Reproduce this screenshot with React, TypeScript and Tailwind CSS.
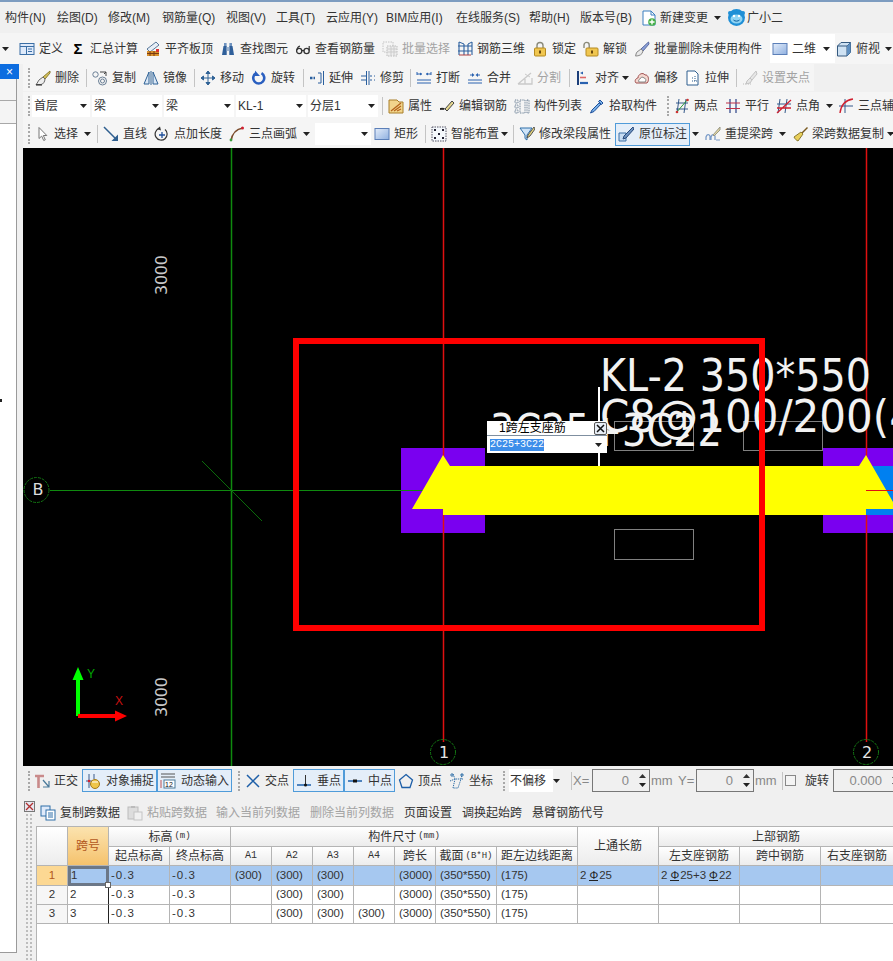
import React from "react";

type N = React.ReactNode;
const S = ({ children, s = 16 }: { children: N; s?: number }) => (
  <svg width={s} height={s} viewBox="0 0 16 16" fill="none" className="block shrink-0">{children}</svg>
);

const Arrow = ({ c = "" }: { c?: string }) => (
  <svg width="7" height="4" viewBox="0 0 7 4" className={`block shrink-0 ${c}`}><path d="M0 0H7L3.5 4z" fill="#222" /></svg>
);
const Grip = ({ c = "" }: { c?: string }) => <div className={`w-[3px] h-[20px] shrink-0 border-l-2 border-dotted border-[#a8a8a8] ${c}`} />;
const Sep = () => <div className="w-px h-[18px] shrink-0 bg-[#c4c4c4] mr-[5px]" />;

function T({ w, icon, label, off, after }: { w: string; icon?: N; label: string; off?: boolean; after?: N }) {
  return (
    <div className={`flex items-center shrink-0 whitespace-nowrap ${w}`}>
      {icon !== undefined && <span className="w-[16px] h-[16px] mr-[4px] shrink-0 flex items-center justify-center">{icon}</span>}
      <span className={off ? "text-[#a3a3a3]" : ""}>{label}</span>
      {after}
    </div>
  );
}

/* ---- icons ---- */
const IDefine = () => <S><rect x="1" y="2.5" width="14" height="11" fill="#dfeafa" stroke="#3a6ea5" /><path d="M1 5.5h14M9 8h4M9 10.5h4M7.500 5.500v8" stroke="#3a6ea5" /></S>;
const ISigma = () => <span className="font-bold text-[15px] text-black leading-none">Σ</span>;
const IBoard = () => <S><path d="M2 8 11 1l3 3-9 7z" fill="#e7eef6" stroke="#58789a" /><rect x="2" y="10" width="12" height="5" fill="#d8912d" /><path d="M5 10v5M9 10v5M2 12.5h12" stroke="#7a3a10" /><rect x="11" y="8" width="3" height="3" fill="#d33" /></S>;
const IBinoc = () => <S><path d="M2 14 3.5 5h3.2V14zM14 14 12.5 5H9.3V14z" fill="#2f5f9a" /><rect x="4" y="2" width="2.6" height="3" fill="#6f93bf" /><rect x="9.4" y="2" width="2.6" height="3" fill="#6f93bf" /><rect x="6.7" y="6" width="2.6" height="4" fill="#9db4cf" /></S>;
const IGlasses = () => <S><circle cx="4.2" cy="10" r="2.6" stroke="#333" strokeWidth="1.3" /><circle cx="11.6" cy="10" r="2.6" stroke="#333" strokeWidth="1.3" /><path d="M6.8 9.6h2.2M2 9c.2-2 1-3.5 3-4M14.2 9.6V5" stroke="#333" strokeWidth="1.2" /></S>;
const IBatch = () => <S><rect x="1" y="1" width="10" height="10" stroke="#c4c4c4" strokeDasharray="1.5 1" /><rect x="5" y="5" width="10" height="10" fill="#eee" stroke="#bbb" strokeDasharray="1.5 1" /><path d="M5 8h10M5 11h10M9 5v10M12 5v10" stroke="#ccc" /></S>;
const IRebar3D = () => <S><path d="M2 1v13M7 3v11M11 3v11M15 1v13M1 5h14M1 10h14" stroke="#2b5f9e" strokeWidth="1.1" /><path d="M2 1l5 2M15 1l-4 2" stroke="#2b5f9e" /><path d="M2 14h12" stroke="#b04040" /></S>;
const ILock = ({ open }: { open?: boolean }) => <S><path d={open ? "M1 7V4a2.6 2.6 0 0 1 5.2 0v3" : "M5 7V4.5a3 3 0 0 1 6 0V7"} stroke="#8a8a7a" strokeWidth="1.4" /><rect x={open ? 3 : 2.5} y="7" width={open ? 12 : 11} height="8" rx="1" fill="#f0c650" stroke="#b58a20" /><rect x={open ? 8 : 7} y="9.5" width="2" height="3" fill="#6a4a10" /></S>;
const IBrush = () => <S><path d="M14.5 1 7 8l2 2 6-7z" fill="#8aa0d8" stroke="#5a6aa0" /><path d="M7 8 3 11c-1 1-1 3-1.5 4 2 0 5-.5 6.500-2.500L9 10z" fill="#e8e8e8" stroke="#888" /></S>;
const IRect = () => <S><rect x="1" y="2.5" width="14" height="11" fill="url(#rg)" stroke="#5b7fb8" /><defs><linearGradient id="rg" x1="0" y1="0" x2="1" y2="1"><stop offset="0" stopColor="#e4edfa" /><stop offset="1" stopColor="#8fb0e0" /></linearGradient></defs></S>;
const ICube = () => <S><path d="M1.500 5 5 1.500h9.500v10L11 15H1.500z" fill="#cfe2f3" stroke="#34597f" /><path d="M1.500 5H11v10M11 5l3.500-3.500" stroke="#34597f" /><path d="M11 5v10l3.500-3.500v-10z" fill="#5f8fc0" /></S>;
const IDel = () => <S><path d="M15 1 8 7l2 2 5-6z" fill="#d6c35a" stroke="#8a7a30" /><path d="M8 7 4 10c-1 1-1 2.500-3 4.500h5c2 0 4-3 4-5.500z" fill="#eee" stroke="#666" /><path d="M1 15h6" stroke="#222" /></S>;
const ICopy = () => <S><circle cx="3.500" cy="4.500" r="2.700" stroke="#6a7f95" /><circle cx="10.500" cy="11" r="4" stroke="#6a7f95" /><circle cx="10.500" cy="11" r="2" stroke="#6a7f95" /><path d="M8 2h6v4M14 2l-2 2" stroke="#444" /></S>;
const IMirror = () => <S><path d="M1 14 6 2v12zM15 14 10 2v12z" fill="#dbe8f6" stroke="#2f6296" /><path d="M8 1v14" stroke="#2f6296" /></S>;
const IMove = () => <S><path d="M8 1v14M1 8h14M8 1 6 3.500h4zM8 15l-2-2.500h4zM1 8l2.500-2v4zM15 8l-2.500-2v4z" stroke="#2f6296" fill="#2f6296" /></S>;
const IRotate = () => <S><path d="M10.500 3.200A5.500 5.500 0 1 1 5 3.200" stroke="#2a5fc0" strokeWidth="2.600" /><path d="M4 .5v5.500h5z" fill="#2a5fc0" /></S>;
const IExtend = () => <S><path d="M1 8h5" stroke="#2a5f9e" strokeWidth="2.400" strokeDasharray="2.500 1" /><path d="M9 3h3v10H9M14.500 1v14" stroke="#2a5f9e" /></S>;
const ITrim = () => <S><path d="M1 6h5M1 10h5M10 6h2M10 10h2M14 6h1M14 10h1" stroke="#2a5f9e" /><path d="M6.500 1v14M9 1v14" stroke="#2a5f9e" /></S>;
const IBreak = () => <S><path d="M1 5V2M15 5V2M1 4h5M10 4h5M1 10h14M1 13h14" stroke="#2a62b0" /><path d="M6 4 4 2.500v3zM10 4l2-1.500v3z" fill="#2a62b0" /></S>;
const IMerge = () => <S><path d="M1 10h14M1 13h14M3 5h3M10 5h3" stroke="#2a62b0" /><path d="M7.500 5 5 3v4zM8.500 5 11 3v4z" fill="#2a62b0" /></S>;
const ISplit = () => <S><path d="M1 14h14V8M1 14 14 3M8 14V9" stroke="#c9c9c9" strokeWidth="1.300" /><path d="M8 4l5 3" stroke="#c9c9c9" /></S>;
const IAlign = () => <S><path d="M3 1v14" stroke="#1c3f7a" strokeWidth="2" /><path d="M5 13h8" stroke="#2a62b0" strokeWidth="2.200" /><path d="M5 7.500h6" stroke="#d66" strokeWidth="1.600" /><path d="M5 3l3-1.500v3z" fill="#2a62b0" /></S>;
const IOffset = () => <S><path d="M2 13c-2-2 0-5 2-5 0-4 5-6 7-3 3-1 5 5 2 8z" fill="#f6d8d0" stroke="#a05050" /><path d="M5 12c-1-1 0-3 1-3 .5-2 3-2.500 4-1 2 0 2.500 3 1 4z" fill="#fff" stroke="#888" /></S>;
const IStretch = () => <S><path d="M2 1h8l3 3v11H2z" fill="#fff" stroke="#2f5f8f" /><path d="M7 8h1M7 11h5M10 6v5" stroke="#2f5f8f" strokeDasharray="1 1" /></S>;
const IGripSet = () => <S><path d="M1 14h3M6 14h3" stroke="#bbb" strokeDasharray="1 1" /><path d="M14 1 8 8l2 2 5-6zM8 8 5 11l-1 3 4-1 2-3z" fill="#e6e6e6" stroke="#c2c2c2" /></S>;
const IAttr = () => <S><path d="M1 2h8l2 2h4v11H1z" fill="#f2d58c" stroke="#a87f2a" /><path d="M3 13 13 5M6 13l7-5M9 13l4-2" stroke="#b5641c" strokeWidth="1.300" /></S>;
const IEdit = () => <S><path d="M1 11c1-1 3-1 5 0M6 11 13 3l2 2-7 8z" fill="#e6d890" stroke="#444" /><path d="M1 11h4" stroke="#111" strokeWidth="1.500" /></S>;
const IList = () => <S><path d="M1 2h3v3H1zM1 7h3v3H1zM1 12h3v3H1z" stroke="#6a7f95" strokeDasharray="1 .7" /><path d="M6 2h5v13H6zM13 2h2v13h-2z" stroke="#6a7f95" strokeDasharray="1 .7" /></S>;
const IPick = () => <S><path d="M11 2l3 3-1.500 1.500-3-3zM10 5 3 12l-1.500 3L5 13.500 12 6z" fill="#77b0e8" stroke="#1e4f9a" /></S>;
const ITwo = () => <S><path d="M2 5h12M2 11h12M5 1 3 15M12 1l-2 14" stroke="#34598a" /><path d="M2 15 14 1" stroke="#2c9a3a" /><circle cx="3" cy="14" r="1.300" fill="#c33" /><circle cx="13.500" cy="2" r="1.300" fill="#c33" /></S>;
const IPar = () => <S><path d="M5 1v14M11 1v14" stroke="#3a4f8f" strokeWidth="1.300" /><path d="M1 5h14M1 10.500h14" stroke="#c0304a" strokeWidth="1.200" /></S>;
const IAngle = () => <S><path d="M4 1 2 15M11 1 9 15M1 6h14" stroke="#34598a" /><path d="M1 15 15 2M1 10h14" stroke="#d02030" strokeWidth="1.300" /></S>;
const IThree = () => <S><path d="M7 1v14M1 8h14" stroke="#34598a" /><path d="M2 15C3 7 8 2 15 1" stroke="#d02030" strokeWidth="1.400" /></S>;
const ICursor = () => <S><path d="M5 1.500v11l2.700-2.400 2 4.400 1.600-.7-2-4.300h3.500z" fill="#fff" stroke="#777" /></S>;
const ILine = () => <S><path d="M1 1l13 13" stroke="#2f5f8f" strokeWidth="1.500" /><path d="M15 15H8.500L15 8.500z" fill="#2f5f8f" /></S>;
const IPointLen = () => <S><path d="M5 2.500A6 6 0 1 0 11 3.500" stroke="#333" strokeWidth="1.200" /><path d="M8 6v6M5 9h6" stroke="#1e4f9a" strokeWidth="1.300" /><path d="M6 .5 3 3l4 1.500z" fill="#333" /></S>;
const IArc = () => <S><path d="M2 15C3 8 7 3 14 2" stroke="#7a4a2a" strokeWidth="1.500" /><circle cx="2" cy="14" r="1.400" fill="#3a9a3a" /><circle cx="13.500" cy="2" r="1.500" fill="#d02030" /></S>;
const ISmart = () => <S><rect x="1" y="1" width="14" height="14" fill="#f4f8fc" stroke="#556" strokeDasharray="1.500 1" /><path d="M3 3h2v2H3zM11 3h2v2h-2zM7 7h2v2H7zM3 11h2v2H3zM11 11h2v2h-2z" fill="#223" /></S>;
const IModSeg = () => <S><path d="M1 2h12L8 9v5l-2-1.500V9z" fill="#cfe4f8" stroke="#2f6fa8" /><path d="M15 1 9 9l-1 3 3-2 5-7z" fill="#e4d47a" stroke="#555" /></S>;
const IInPlace = () => <S><path d="M1 15V7h7v8z" fill="#c7dcf2" stroke="#3a6ea5" /><path d="M15 1 6 10l-1 3 3-1 8-9z" fill="#6f93c0" stroke="#28497a" /></S>;
const IRe = () => <S><path d="M1 14v-3c1-3 3-3 4-1v4M6 14v-3c1-3 3-3 4-1v4" stroke="#7a9bc8" strokeWidth="1.300" /><path d="M15 1 8 9l1 1 6-6z" fill="#e4d6a0" stroke="#998" /><path d="M11 14h4" stroke="#7a9bc8" /></S>;
const IBroom = () => <S><path d="M15 1 9 7l1 1 6-6z" fill="#7a5a20" /><path d="M9 6 2 11c1 2 2 3 4 4l5-7z" fill="#e9cf5a" stroke="#8a7a30" /></S>;
const IOrtho = () => <S><path d="M1 3h9M4.500 3v12" stroke="#c98a8a" strokeWidth="2.600" /><path d="M9 7l6 7M9 14h6V8" stroke="#4a7a9a" strokeWidth="1.200" /></S>;
const ISnap = () => <S><path d="M4 1v14M1 8h6M9 1v5" stroke="#3a5a8a" /><circle cx="10" cy="11" r="4.500" fill="#efc64a" stroke="#a57a1a" /><path d="M7 9h6" stroke="#fff" /><circle cx="4" cy="8" r="1.300" fill="#d02030" /></S>;
const IDyn = () => <S><path d="M1 1h14M1 4h14" stroke="#555" /><rect x="4" y="7" width="11" height="8" fill="#fff" stroke="#4a7a9a" /><text x="5" y="14" fontSize="7" fill="#111" fontFamily="Liberation Sans">12</text><path d="M1 7v8" stroke="#c05050" /></S>;
const ICross = () => <S><path d="M2 2l12 12M14 2 2 14" stroke="#1e5fa8" strokeWidth="1.500" /></S>;
const IPerp = () => <S><path d="M1 12h14" stroke="#1e5fa8" strokeWidth="1.500" /><path d="M9.500 2v10" stroke="#333" /><circle cx="9.500" cy="12" r="1.500" fill="#111" /></S>;
const IMid = () => <S><path d="M1 8h14" stroke="#1e5fa8" strokeWidth="1.500" /><rect x="6" y="6.500" width="4" height="3" fill="#111" /></S>;
const IVertex = () => <S><path d="M8 1.500 14.500 7 12 14.500H4L1.500 7z" stroke="#1e5fa8" strokeWidth="1.300" /></S>;
const ICoord = () => <S><path d="M4 15 6 6h6l-3 9zM1 8l5-2M14 6l-2 0M4 1l2 5M13 1l-1 5" stroke="#2f6fa8" strokeDasharray="1.200 .8" /><circle cx="3" cy="2" r="1.200" stroke="#2f6fa8" /><circle cx="13" cy="2" r="1.200" stroke="#2f6fa8" /></S>;
const ICopyData = () => <S><rect x="1" y="1" width="9" height="10" fill="#dfeafa" stroke="#2f6fa8" /><rect x="6" y="5" width="9" height="10" fill="#fff" stroke="#2f6fa8" /><path d="M8 8h5M8 10h5M8 12h5" stroke="#2f6fa8" /></S>;
const IPaste = () => <S><rect x="1" y="2" width="10" height="12" fill="#ddd" stroke="#bbb" /><rect x="4" y="1" width="4" height="2" fill="#bbb" /><rect x="7" y="7" width="8" height="8" fill="#f0f0f0" stroke="#c4c4c4" /></S>;
const IDoc = () => <S><path d="M2 1h8l4 4v10H2z" fill="#fff" stroke="#3a7fc0" /><path d="M10 1v4h4" stroke="#3a7fc0" /><circle cx="11" cy="12" r="3.800" fill="#45b045" /><path d="M11 9.500v5M8.500 12h5" stroke="#fff" strokeWidth="1.400" /></S>;
const IFace = () => <svg width="19" height="19" viewBox="0 0 19 19" className="block shrink-0"><circle cx="9.500" cy="9.500" r="8.500" fill="#1f8fd6" /><circle cx="3" cy="5" r="2" fill="#1f8fd6" /><circle cx="16" cy="5" r="2" fill="#1f8fd6" /><ellipse cx="9.500" cy="11" rx="6" ry="4.500" fill="#8fd4f4" /><circle cx="7" cy="8" r="1.200" fill="#fff" /><circle cx="12" cy="8" r="1.200" fill="#fff" /><path d="M6.500 12c1.500 1.500 4.500 1.500 6 0" stroke="#0a5a9a" fill="none" /></svg>;

/* ---- combo ---- */
function Combo({ w, label }: { w: string; label?: string }) {
  return (
    <div className={`h-[22px] bg-white flex items-center justify-between shrink-0 pl-[2px] pr-[3px] ${w}`}>
      <span>{label}</span>
      <Arrow />
    </div>
  );
}

const Active = ({ w, icon, label }: { w: string; icon: N; label: string }) => (
  <div className={`h-[23px] shrink-0 flex items-center pl-[2px] border border-[#4f9bd9] bg-[#e4eef9] whitespace-nowrap ${w}`}>
    <span className="w-[16px] h-[16px] mr-[5px] flex items-center justify-center">{icon}</span>
    <span>{label}</span>
  </div>
);

const Spin = ({ w, val }: { w: string; val: string }) => (
  <div className={`h-[23px] shrink-0 border border-[#777] bg-[#f0f0f0] flex items-center justify-end text-[13px] text-[#888] ${w}`}>
    <span className="mr-[6px]">{val}</span>
    <div className="w-[14px] flex flex-col items-center gap-[5px]">
      <svg width="7" height="4" viewBox="0 0 7 4" className="block"><path d="M0 4H7L3.500 0z" fill="#333" /></svg>
      <Arrow />
    </div>
  </div>
);

/* ---- grid ---- */
const HC = ({ c, children }: { c: string; children?: N }) => (
  <div className={`flex items-center justify-center border-r border-b border-[#b4b4b4] bg-gradient-to-b from-white to-[#ececec] whitespace-nowrap overflow-hidden ${c}`}>{children}</div>
);
const Small = ({ children }: { children: N }) => <span className="text-[9px] font-['Liberation_Mono',monospace] ml-[2px]">{children}</span>;
const Bar = () => <span className="border-b border-[#222] text-[11px] leading-[10px] ml-[3px] mr-[1px] text-[#222]">Φ</span>;

const rows = [
  { n: "1", a1: "(300)", a2: "(300)", a3: "(300)", a4: "" },
  { n: "2", a1: "", a2: "(300)", a3: "(300)", a4: "" },
  { n: "3", a1: "", a2: "(300)", a3: "(300)", a4: "(300)" },
];
function Cell({ sel, children, c = "pl-[4px]" }: { sel: boolean; children?: N; c?: string }) {
  return (
    <div className={`border-r border-b border-[#b4b4b4] flex items-center whitespace-nowrap overflow-hidden text-[11.5px] ${sel ? "bg-[#a6c8f0]" : "bg-white"} ${c}`}>{children}</div>
  );
}

export default function App() {
  return (
    <div className="w-[893px] h-[961px] overflow-hidden flex flex-col bg-[#f0f0f0] text-[12px] leading-none text-[#333] font-['Liberation_Sans','Noto_Sans_CJK_SC',sans-serif]">
      {/* menu */}
      <div className="h-[33px] shrink-0 border-t-2 border-[#7d9cc0] flex items-center pl-[5px] whitespace-nowrap">
        <span className="w-[52px] shrink-0">构件(N)</span>
        <span className="w-[51px] shrink-0">绘图(D)</span>
        <span className="w-[54px] shrink-0">修改(M)</span>
        <span className="w-[64px] shrink-0">钢筋量(Q)</span>
        <span className="w-[50px] shrink-0">视图(V)</span>
        <span className="w-[50px] shrink-0">工具(T)</span>
        <span className="w-[60px] shrink-0">云应用(Y)</span>
        <span className="w-[70px] shrink-0">BIM应用(I)</span>
        <span className="w-[73px] shrink-0">在线服务(S)</span>
        <span className="w-[51px] shrink-0">帮助(H)</span>
        <span className="w-[61px] shrink-0">版本号(B)</span>
        <div className="flex items-center w-[86px] shrink-0"><IDoc /><span className="ml-[3px]">新建变更</span><Arrow c="ml-[6px]" /></div>
        <div className="flex items-center"><IFace /><span className="ml-[1px]">广小二</span></div>
      </div>

      {/* toolbar 1 */}
      <div className="h-[31px] shrink-0 flex items-center bg-[#f5f5f5]">
        <div className="w-[19px] shrink-0 flex justify-center pr-[9px]"><Arrow /></div>
        <T w="w-[51px]" icon={<IDefine />} label="定义" />
        <T w="w-[75px]" icon={<ISigma />} label="汇总计算" />
        <T w="w-[75px]" icon={<IBoard />} label="平齐板顶" />
        <T w="w-[75px]" icon={<IBinoc />} label="查找图元" />
        <T w="w-[87px]" icon={<IGlasses />} label="查看钢筋量" />
        <T w="w-[75px]" icon={<IBatch />} label="批量选择" off />
        <T w="w-[75px]" icon={<IRebar3D />} label="钢筋三维" />
        <T w="w-[51px]" icon={<ILock />} label="锁定" />
        <T w="w-[51px]" icon={<ILock open />} label="解锁" />
        <T w="w-[136px]" icon={<IBrush />} label="批量删除未使用构件" />
        <div className="w-[65px] h-[29px] shrink-0 bg-white flex items-center pl-[2px]">
          <T w="w-[60px]" icon={<IRect />} label="二维" after={<Arrow c="ml-[7px]" />} />
        </div>
        <div className="ml-[1px]"><T w="w-[56px]" icon={<ICube />} label="俯视" after={<Arrow c="ml-[5px]" />} /></div>
      </div>

      <div className="flex-1 flex min-h-0">
        {/* left panel */}
        <div className="w-[23px] shrink-0 flex flex-col">
          <div className="w-[17px] flex-1 flex flex-col bg-white border-r border-[#9a9a9a]">
            <div className="h-[15px] w-[19px] shrink-0 bg-[#0d6de0] flex items-center justify-center text-white text-[12px]">×</div>
            <div className="h-[22px] shrink-0 bg-[#f4f4f4] border-b border-[#a8a8a8]" />
            <div className="h-[23px] shrink-0 bg-[#f4f4f4] border-b border-[#a8a8a8]" />
            <div className="flex-1" />
            <div className="w-[2px] h-[3px] bg-[#222] mb-[550px]" />
          </div>
          <div className="h-[9px] shrink-0 w-[17px] border-t border-[#9a9a9a]" />
        </div>

        <div className="w-[870px] flex flex-col min-h-0">
          {/* toolbar 2 */}
          <div className="h-[28px] shrink-0 flex items-start">
            <div className="h-[27px] w-[791px] flex items-center pl-[5px] bg-[#f5f5f5]">
              <Grip c="mr-[4px]" />
              <T w="w-[51px]" icon={<IDel />} label="删除" />
              <Sep />
              <T w="w-[51px]" icon={<ICopy />} label="复制" />
              <T w="w-[51px]" icon={<IMirror />} label="镜像" />
              <Sep />
              <T w="w-[51px]" icon={<IMove />} label="移动" />
              <T w="w-[52px]" icon={<IRotate />} label="旋转" />
              <Sep />
              <T w="w-[51px]" icon={<IExtend />} label="延伸" />
              <T w="w-[50px]" icon={<ITrim />} label="修剪" />
              <Sep />
              <T w="w-[51px]" icon={<IBreak />} label="打断" />
              <T w="w-[50px]" icon={<IMerge />} label="合并" />
              <T w="w-[52px]" icon={<ISplit />} label="分割" off />
              <Sep />
              <T w="w-[59px]" icon={<IAlign />} label="对齐" after={<Arrow c="ml-[3px]" />} />
              <T w="w-[51px]" icon={<IOffset />} label="偏移" />
              <T w="w-[51px]" icon={<IStretch />} label="拉伸" />
              <Sep />
              <T w="w-[68px]" icon={<IGripSet />} label="设置夹点" off />
            </div>
          </div>

          {/* toolbar 3 */}
          <div className="h-[28px] shrink-0 flex items-center pl-[5px] whitespace-nowrap bg-[#f5f5f5]">
            <Grip c="mr-[1px]" />
            <Combo w="w-[58px] mr-[2px]" label="首层" />
            <Combo w="w-[70px] mr-[2px]" label="梁" />
            <Combo w="w-[70px] mr-[2px]" label="梁" />
            <Combo w="w-[70px] mr-[2px]" label="KL-1" />
            <Combo w="w-[70px] mr-[4px]" label="分层1" />
            <Sep />
            <T w="w-[51px]" icon={<IAttr />} label="属性" />
            <T w="w-[75px]" icon={<IEdit />} label="编辑钢筋" />
            <T w="w-[75px]" icon={<IList />} label="构件列表" />
            <T w="w-[78px]" icon={<IPick />} label="拾取构件" />
            <Grip c="mr-[4px]" />
            <T w="w-[51px]" icon={<ITwo />} label="两点" />
            <T w="w-[51px]" icon={<IPar />} label="平行" />
            <T w="w-[62px]" icon={<IAngle />} label="点角" after={<Arrow c="ml-[6px]" />} />
            <T w="w-[60px]" icon={<IThree />} label="三点辅轴" />
          </div>

          {/* toolbar 4 */}
          <div className="h-[28px] shrink-0 flex items-center pl-[5px] whitespace-nowrap bg-[#f5f5f5]">
            <Grip c="mr-[3px]" />
            <T w="w-[63px]" icon={<ICursor />} label="选择" after={<Arrow c="ml-[6px]" />} />
            <Sep />
            <T w="w-[51px]" icon={<ILine />} label="直线" />
            <T w="w-[75px]" icon={<IPointLen />} label="点加长度" />
            <T w="w-[83px]" icon={<IArc />} label="三点画弧" after={<Arrow c="ml-[6px]" />} />
            <Combo w="w-[56px] ml-[3px] mr-[3px]" />
            <T w="w-[51px]" icon={<IRect />} label="矩形" />
            <Sep />
            <T w="w-[82px]" icon={<ISmart />} label="智能布置" after={<Arrow c="ml-[2px]" />} />
            <Sep />
            <T w="w-[96px]" icon={<IModSeg />} label="修改梁段属性" />
            <Active w="w-[75px]" icon={<IInPlace />} label="原位标注" />
            <div className="w-[15px] shrink-0 flex pl-[2px]"><Arrow /></div>
            <T w="w-[87px]" icon={<IRe />} label="重提梁跨" after={<Arrow c="ml-[6px]" />} />
            <T w="w-[100px]" icon={<IBroom />} label="梁跨数据复制" after={<Arrow c="ml-[3px]" />} />
          </div>

          {/* canvas */}
          <div className="h-[618px] shrink-0 relative bg-black overflow-hidden">
            <svg width="870" height="618" viewBox="23 148 870 618" className="block">
              <path d="M231.500 148V766" stroke="#0f8a0f" strokeWidth="1.500" />
              <path d="M50 490.500H443" stroke="#0f8a0f" />
              <path d="M202 461 262 521" stroke="#0a6a0a" />
              <circle cx="36.500" cy="490" r="12.500" stroke="#137513" strokeDasharray="3 1" fill="none" />
              <text x="38" y="495" textAnchor="middle" fontSize="16" fill="#dcdcdc" className="font-['DejaVu_Sans']">B</text>

              <rect x="401" y="448" width="84" height="85" fill="#7a00f0" />
              <rect x="823" y="448" width="70" height="85" fill="#7a00f0" />
              <path d="M443.500 148V742M866.500 148V742" stroke="#e01010" strokeWidth="1.500" />
              <path d="M390 490.500H443" stroke="#0f8a0f" />
              <rect x="866" y="466" width="27" height="49" fill="#0080f0" />
              <path d="M443 455 450 466H859L866 455 897 509H866V515H443V509H412z" fill="#ffff00" />
              <path d="M866 490.500H893" stroke="#e01010" />

              <rect x="614.500" y="421.500" width="79" height="29" fill="none" stroke="#808080" />
              <rect x="743.500" y="421.500" width="79" height="29" fill="none" stroke="#808080" />
              <rect x="614.500" y="529.500" width="79" height="30" fill="none" stroke="#808080" />

              <g fill="#f2f2f2" fontSize="44" className="font-['DejaVu_Sans']">
                <text x="600" y="391" textLength="271" lengthAdjust="spacingAndGlyphs">KL-2 350*550</text>
                <text x="600" y="432" textLength="316" lengthAdjust="spacingAndGlyphs">C8@100/200(4</text>
                <text x="490" y="446" textLength="232" lengthAdjust="spacingAndGlyphs">3C25+3C22</text>
              </g>
              <rect x="598" y="387" width="2" height="79" fill="#fff" />

              <rect x="296" y="341" width="466" height="287" fill="none" stroke="#ff0000" strokeWidth="6" />

              <g fill="#c8c8c8" fontSize="16" className="font-['DejaVu_Sans']">
                <text transform="translate(167 295) rotate(-90)" textLength="40">3000</text>
                <text transform="translate(167 717) rotate(-90)" textLength="40">3000</text>
              </g>

              <path d="M76 716V680H72.500L78 667 83.500 680H80V716z" fill="#00ff00" />
              <path d="M78 714H115V710.500L127 716 115 721.500V718H78z" fill="#ff0000" />
              <text x="87" y="678" fontSize="12" fill="#00a800" className="font-['Liberation_Sans']">Y</text>
              <text x="115" y="705" fontSize="12" fill="#c81010" className="font-['Liberation_Sans']">X</text>

              <circle cx="443" cy="752" r="12.500" stroke="#137513" strokeDasharray="3 1" fill="none" />
              <text x="444" y="758" textAnchor="middle" fontSize="16" fill="#e6e6e6" className="font-['DejaVu_Sans']">1</text>
              <circle cx="866" cy="752" r="12.500" stroke="#137513" strokeDasharray="3 1" fill="none" />
              <text x="867" y="758" textAnchor="middle" fontSize="16" fill="#e6e6e6" className="font-['DejaVu_Sans']">2</text>
            </svg>

            {/* popup editor */}
            <div className="absolute left-[464px] top-[273px] w-[120px] h-[32px] bg-white flex flex-col text-black">
              <div className="h-[15px] flex items-center justify-between border-b border-[#7f8fa0]">
                <span className="ml-[12px]">1跨左支座筋</span>
                <div className="w-[13px] h-[13px] border border-[#555] rounded-[2px] bg-[#e8eef6] flex items-center justify-center">
                  <svg width="9" height="9" viewBox="0 0 9 9" className="block"><path d="M1 1l7 7M8 1 1 8" stroke="#111" strokeWidth="1.500" /></svg>
                </div>
              </div>
              <div className="flex-1 flex items-center justify-between pl-[3px] pr-[5px]">
                <span className="bg-[#3d8eea] text-white text-[10px] font-['Liberation_Mono',monospace] h-[12px] w-[54px] flex items-center overflow-hidden whitespace-nowrap">2C25+3C22</span>
                <Arrow />
              </div>
            </div>
          </div>

          {/* status toolbar */}
          <div className="h-[34px] shrink-0 flex pt-[3px] pl-[5px] whitespace-nowrap">
            <Grip c="mt-[2px] mr-[3px]" />
            <div className="h-[23px] flex items-center"><T w="w-[48px]" icon={<IOrtho />} label="正交" /></div>
            <Active w="w-[75px]" icon={<ISnap />} label="对象捕捉" />
            <Active w="w-[75px]" icon={<IDyn />} label="动态输入" />
            <Grip c="mt-[2px] ml-[6px] mr-[4px]" />
            <div className="h-[23px] flex items-center"><T w="w-[48px]" icon={<ICross />} label="交点" /></div>
            <Active w="w-[51px]" icon={<IPerp />} label="垂点" />
            <Active w="w-[51px]" icon={<IMid />} label="中点" />
            <div className="h-[23px] flex items-center ml-[3px]">
              <T w="w-[51px]" icon={<IVertex />} label="顶点" />
              <T w="w-[54px]" icon={<ICoord />} label="坐标" />
            </div>
            <Grip c="mt-[2px] mr-[3px]" />
            <div className="h-[23px] w-[57px] shrink-0 flex items-center justify-between pr-[6px]">
              <span className="bg-white h-[23px] w-[44px] flex items-center pl-[1px]">不偏移</span>
              <Arrow />
            </div>
            <div className="w-px h-[18px] mt-[3px] ml-[5px] mr-[1px] bg-[#c4c4c4] shrink-0" />
            <div className="h-[23px] w-[19px] shrink-0 flex items-center text-[#888] text-[13px]">X=</div>
            <Spin w="w-[58px]" val="0" />
            <div className="h-[23px] w-[28px] shrink-0 flex items-center pl-[1px] text-[#888] text-[13px]">mm</div>
            <div className="h-[23px] w-[18px] shrink-0 flex items-center text-[#888] text-[13px]">Y=</div>
            <Spin w="w-[58px]" val="0" />
            <div className="h-[23px] w-[28px] shrink-0 flex items-center pl-[1px] text-[#888] text-[13px]">mm</div>
            <div className="w-px h-[18px] mt-[3px] mr-[2px] bg-[#c4c4c4] shrink-0" />
            <div className="h-[23px] flex items-center shrink-0">
              <div className="w-[11px] h-[11px] border border-[#888] bg-[#f4f4f4]" />
              <span className="ml-[9px]">旋转</span>
            </div>
            <Spin w="w-[70px] ml-[4px]" val="0.000" />
          </div>

          {/* lower panel */}
          <div className="flex-1 min-h-0 flex bg-[#f0f0f0]">
            <div className="w-[13px] shrink-0 flex flex-col items-start pt-[1px]">
              <svg width="11" height="11" viewBox="0 0 11 11" className="block ml-[1px]"><rect x=".5" y=".5" width="10" height="10" fill="#e8e8f0" stroke="#777" /><path d="M2 2l7 7M9 2 2 9" stroke="#b03030" strokeWidth="1.300" /></svg>
              <div className="w-[8px] flex-1 mt-[1px] ml-[2px] bg-[radial-gradient(#bdbdbd_1px,transparent_1px)] bg-[length:4px_4px]" />
            </div>
            <div className="w-[857px] flex flex-col min-h-0">
              <div className="h-[26px] shrink-0 flex items-center pl-[4px] whitespace-nowrap">
                <T w="w-[87px]" icon={<ICopyData />} label="复制跨数据" />
                <T w="w-[89px]" icon={<IPaste />} label="粘贴跨数据" off />
                <T w="w-[94px]" label="输入当前列数据" off />
                <T w="w-[94px]" label="删除当前列数据" off />
                <T w="w-[58px]" label="页面设置" />
                <T w="w-[70px]" label="调换起始跨" />
                <T w="w-[80px]" label="悬臂钢筋代号" />
              </div>
              <div className="flex-1 bg-white overflow-hidden border-l border-[#b4b4b4]">
                <div className="grid w-[857px] border-t border-[#b4b4b4] grid-cols-[31px_41px_61px_61px_41px_41px_41px_41px_41px_61px_81px_81px_81px_81px_73px] grid-rows-[20px_19px_20px_19px_19px]">
                  <HC c="row-span-2" />
                  <div className="row-span-2 flex items-center justify-center border-r border-b border-[#b4b4b4] bg-gradient-to-b from-[#fbe3ae] to-[#f5c26c] text-[#b2571c]">跨号</div>
                  <HC c="col-span-2">标高<Small>(m)</Small></HC>
                  <HC c="col-span-7">构件尺寸<Small>(mm)</Small></HC>
                  <HC c="row-span-2">上通长筋</HC>
                  <HC c="col-span-3">上部钢筋</HC>
                  <HC c="">起点标高</HC>
                  <HC c="">终点标高</HC>
                  <HC c="text-[10px] font-['Liberation_Mono',monospace]">A1</HC>
                  <HC c="text-[10px] font-['Liberation_Mono',monospace]">A2</HC>
                  <HC c="text-[10px] font-['Liberation_Mono',monospace]">A3</HC>
                  <HC c="text-[10px] font-['Liberation_Mono',monospace]">A4</HC>
                  <HC c="">跨长</HC>
                  <HC c="">截面<Small>(B*H)</Small></HC>
                  <HC c="">距左边线距离</HC>
                  <HC c="">左支座钢筋</HC>
                  <HC c="">跨中钢筋</HC>
                  <HC c="">右支座钢筋</HC>
                  {rows.map((r, i) => {
                    const sel = i === 0;
                    const num = "-0.3";
                    return (
                      <React.Fragment key={r.n}>
                        <div className={`border-r border-b border-[#b4b4b4] flex items-center justify-center text-[11.500px] ${sel ? "bg-[#fcd893] text-[#b2571c]" : "bg-[#f6f6f6]"}`}>{r.n}</div>
                        {sel ? (
                          <div className="relative border-[3px] border-[#6b7787] bg-[#a6c8f0] flex items-center text-[11.500px]">
                            {r.n}
                            <span className="absolute right-[-5px] bottom-[-5px] w-[6px] h-[6px] bg-white border border-[#666]" />
                          </div>
                        ) : (
                          <Cell sel={false} c="border-r-[#222] pl-[2px]">{r.n}</Cell>
                        )}
                        <Cell sel={sel} c="tracking-[1px] pl-[2px]">{num}</Cell>
                        <Cell sel={sel} c="tracking-[1px] pl-[2px]">{num}</Cell>
                        <Cell sel={sel}>{r.a1}</Cell>
                        <Cell sel={sel}>{r.a2}</Cell>
                        <Cell sel={sel}>{r.a3}</Cell>
                        <Cell sel={sel}>{r.a4}</Cell>
                        <Cell sel={sel}>(3000)</Cell>
                        <Cell sel={sel}>(350*550)</Cell>
                        <Cell sel={sel}>(175)</Cell>
                        <Cell sel={sel} c="pl-[2px]">{sel && <>2<Bar />25</>}</Cell>
                        <Cell sel={sel} c="pl-[2px]">{sel && <>2<Bar />25+3<Bar />22</>}</Cell>
                        <Cell sel={sel} />
                        <Cell sel={sel} />
                      </React.Fragment>
                    );
                  })}
                </div>
              </div>
            </div>
          </div>
        </div>
      </div>
    </div>
  );
}
